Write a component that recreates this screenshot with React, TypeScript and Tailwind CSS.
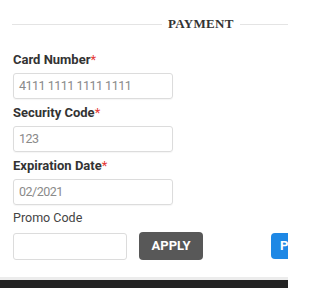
import React from "react";

const fields = [
  { label: "Card Number", value: "4111 1111 1111 1111" },
  { label: "Security Code", value: "123" },
  { label: "Expiration Date", value: "02/2021" },
];

export default function App() {
  return (
    <div className="w-[288px] h-[288px] overflow-hidden bg-white flex flex-col font-['Roboto',sans-serif]">
      <div className="flex-1 pt-[12px] pl-[13px] overflow-hidden">
        {/* en-tête */}
        <div className="h-[24px] flex items-center -ml-[1px]">
          <div className="w-[150px] shrink-0 h-px bg-[#e4e4e4]" />
          <span className="shrink-0 px-[6px] text-[13px] font-bold text-[#333] font-['Liberation_Serif',serif] tracking-[0.3px]">
            PAYMENT
          </span>
          <div className="flex-1 h-px bg-[#e4e4e4]" />
        </div>

        <div className="mt-[10px]">
          {fields.map((f) => (
            <div key={f.label}>
              <div className="h-[27px] flex items-center text-[13px] font-bold text-[#333]">
                {f.label}
                <span className="text-[#e53935] font-normal">*</span>
              </div>
              <div className="w-[160px] h-[26px] border border-[#dcdcdc] rounded-[3px] flex items-center px-[5px] text-[12.5px] tracking-[-0.5px] text-[#8a8a8a] shadow-[0_1px_1px_rgba(0,0,0,0.04)]">
                {f.value}
              </div>
            </div>
          ))}

          <div className="h-[27px] flex items-center text-[12.5px] text-[#444]">Promo Code</div>
          <div className="flex items-center w-[400px]">
            <div className="w-[114px] shrink-0 h-[27px] border border-[#dcdcdc] rounded-[3px]" />
            <button className="ml-[12px] shrink-0 w-[64px] h-[28px] rounded-[4px] bg-[#585858] text-white text-[13px] font-bold">
              APPLY
            </button>
            <button className="ml-[68px] shrink-0 w-[110px] h-[26px] rounded-[4px] bg-[#1e88e5] text-white text-[13px] font-bold text-left pl-[9px]">
              PLACE ORDER
            </button>
          </div>
        </div>
      </div>
      <div className="h-[3px] bg-[#ececec]" />
      <div className="h-[8px] bg-[#232323]" />
    </div>
  );
}
